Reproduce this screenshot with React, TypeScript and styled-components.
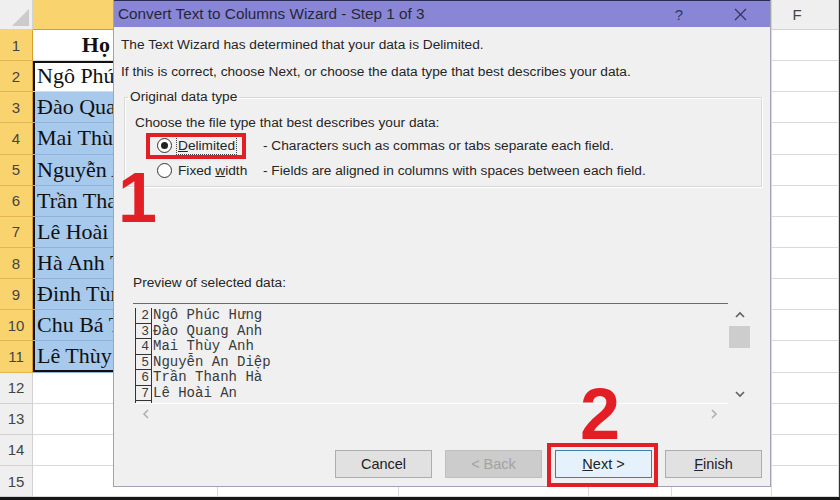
import React from 'react'
import styled, { createGlobalStyle } from 'styled-components'

const colors = {
    red: '#e31e24',
    yellow: '#f9d36e',
    yellowLine: '#e2b452',
    headGrey: '#efefef',
    headLine: '#d2d2d2',
    grid: '#dadada',
    blue: '#a7c9eb',
    dialog: '#f0f0f0',
    title: '#8986d6',
}

const GlobalStyle = createGlobalStyle`
    html, body {
        margin: 0;
        padding: 0;
    }
    body {
        width: 840px;
        height: 500px;
        overflow: hidden;
        background: #fff;
        font-family: 'Liberation Sans', Arial, sans-serif;
    }
`

const Screen = styled.div`
    position: relative;
    width: 840px;
    height: 500px;
    overflow: hidden;
    box-sizing: border-box;
    border-right: 1px solid #333;
    border-bottom: 3px solid #161616;
`

/* ---------- spreadsheet behind the dialog ---------- */

const Sheet = styled.div`
    display: grid;
    grid-template-columns: 33px 185px 181px 190px 83px 100px 1fr;
    grid-template-rows: 30px repeat(15, 31.15px);
`

const Corner = styled.div`
    position: relative;
    background: ${colors.headGrey};
    border-right: 1px solid ${colors.headLine};
    border-bottom: 1px solid ${colors.headLine};
    &:after {
        content: '';
        position: absolute;
        right: 3px;
        bottom: 3px;
        border-left: 17px solid transparent;
        border-bottom: 17px solid #cbcbcb;
    }
`

const ColHead = styled.div<{ $active?: boolean }>`
    box-sizing: border-box;
    display: flex;
    align-items: center;
    justify-content: center;
    padding-right: ${(p) => (p.$active ? 0 : 16)}px;
    font-size: 15px;
    color: #444;
    background: ${(p) => (p.$active ? colors.yellow : colors.headGrey)};
    border-right: 1px solid ${(p) => (p.$active ? colors.yellowLine : colors.headLine)};
    border-bottom: 1px solid ${(p) => (p.$active ? '#d69c2c' : colors.headLine)};
`

const RowHead = styled.div<{ $active?: boolean }>`
    box-sizing: border-box;
    display: flex;
    align-items: center;
    justify-content: center;
    font-size: 15px;
    color: #444;
    background: ${(p) => (p.$active ? colors.yellow : colors.headGrey)};
    border-right: 1px solid ${(p) => (p.$active ? '#d69c2c' : colors.headLine)};
    border-bottom: 1px solid ${(p) => (p.$active ? colors.yellowLine : colors.headLine)};
`

const Cell = styled.div<{ $blue?: boolean; $head?: boolean; $sel?: string }>`
    box-sizing: border-box;
    display: flex;
    align-items: center;
    justify-content: ${(p) => (p.$head ? 'center' : 'flex-start')};
    padding-left: 4px;
    overflow: hidden;
    white-space: nowrap;
    font-family: 'Liberation Serif', 'Times New Roman', serif;
    font-size: 22px;
    font-weight: ${(p) => (p.$head ? 700 : 400)};
    color: #111;
    background: ${(p) => (p.$blue ? colors.blue : '#fff')};
    border-right: 1px solid ${colors.grid};
    border-bottom: 1px solid ${(p) => (p.$blue ? '#8fb3d8' : colors.grid)};
    box-shadow: ${(p) => p.$sel || 'none'};
`

const names = [
    'Ngô Phúc Hưng',
    'Đào Quang Anh',
    'Mai Thùy Anh',
    'Nguyễn An Diệp',
    'Trần Thanh Hà',
    'Lê Hoài An',
    'Hà Anh Tuấn',
    'Đinh Tùng Lâm',
    'Chu Bá Thông',
    'Lê Thùy Linh',
]

// B..E sit under the dialog, so their letters are never seen
const columns = ['A', 'B', 'C', 'D', 'E', 'F']

const SpreadSheet = () => {
    const cells: React.ReactNode[] = [<Corner key='corner' />]
    columns.forEach((c) =>
        cells.push(
            <ColHead key={c} $active={c === 'A'}>
                {c === 'F' ? c : ''}
            </ColHead>
        )
    )
    for (let r = 1; r <= 15; r++) {
        cells.push(
            <RowHead key={'r' + r} $active={r <= 11}>
                {r}
            </RowHead>
        )
        columns.forEach((c) => {
            let text = ''
            let sel = ''
            if (c === 'A' && r === 1) text = 'Họ và tên'
            if (c === 'A' && r >= 2 && r <= 11) {
                text = names[r - 2]
                const parts = ['inset 2px 0 0 #111']
                if (r === 2) parts.push('inset 0 2px 0 #111')
                if (r === 11) parts.push('inset 0 -2px 0 #111')
                sel = parts.join(', ')
            }
            cells.push(
                <Cell key={c + r} $head={r === 1} $blue={c === 'A' && r >= 3 && r <= 11} $sel={sel}>
                    {text}
                </Cell>
            )
        })
    }
    return <Sheet>{cells}</Sheet>
}

/* ---------- the wizard dialog ---------- */

const Dialog = styled.div`
    position: absolute;
    left: 113px;
    top: 0;
    width: 658px;
    height: 487px;
    box-sizing: border-box;
    display: flex;
    flex-direction: column;
    background: ${colors.dialog};
    border: 1px solid #a3a2b4;
    border-top: none;
    font-family: 'Liberation Sans', Arial, sans-serif;
    font-size: 13.7px;
    color: #262626;
`

const TitleBar = styled.div`
    height: 27px;
    flex: none;
    display: flex;
    align-items: center;
    padding: 0 23px 0 4px;
    background: ${colors.title};
    border-top: 1px solid #2c2a55;
    box-sizing: border-box;
`

const Title = styled.span`
    font-size: 15.3px;
    color: #26263a;
`

const TitleControls = styled.div`
    margin-left: auto;
    display: flex;
    align-items: center;
    gap: 51px;
    color: #34345c;
    font-size: 15px;
`

const Body = styled.div`
    flex: 1;
    display: flex;
    flex-direction: column;
    padding: 9px 8px 8px 7px;
`

const Line = styled.div<{ $mt?: number; $ml?: number }>`
    line-height: 18px;
    margin-top: ${(p) => p.$mt || 0}px;
    margin-left: ${(p) => p.$ml || 0}px;
    white-space: nowrap;
`

const GroupBox = styled.fieldset`
    margin: 7px 0 0 3px;
    padding: 0 0 3px 10px;
    border: 1px solid #d9d9d9;
    box-shadow: 1px 1px 0 #fff, inset 1px 1px 0 #fff;
`

const Legend = styled.legend`
    margin-left: -7px;
    padding: 0 2px;
    line-height: 18px;
`

const RadioRow = styled.div<{ $first?: boolean }>`
    position: relative;
    height: 25px;
    display: flex;
    align-items: center;
    margin: ${(p) => (p.$first ? 1 : 0)}px 0 0 22px;
`

const RadioDot = styled.span<{ $checked?: boolean }>`
    width: 13px;
    height: 13px;
    flex: none;
    border: 1px solid #333;
    border-radius: 50%;
    background: #fff;
    display: flex;
    align-items: center;
    justify-content: center;
    &:after {
        content: '';
        width: 7px;
        height: 7px;
        border-radius: 50%;
        background: ${(p) => (p.$checked ? '#222' : 'transparent')};
    }
`

const RadioLabel = styled.span`
    width: 85px;
    margin-left: 6px;
    flex: none;
`

const Focus = styled.span`
    outline: 1px dotted #444;
    outline-offset: 1px;
`

const Mnemonic = styled.span`
    text-decoration: underline;
`

const RedBox = styled.div<{ $l: number; $t: number; $w: number; $h: number }>`
    position: absolute;
    left: ${(p) => p.$l}px;
    top: ${(p) => p.$t}px;
    width: ${(p) => p.$w}px;
    height: ${(p) => p.$h}px;
    box-sizing: border-box;
    border: 4px solid ${colors.red};
    pointer-events: none;
`

const Preview = styled.div`
    margin: 11px 2px 0 12px;
    display: grid;
    grid-template-columns: 1fr 32px;
    grid-template-rows: 101px 20px;
`

const PreviewList = styled.div`
    overflow: hidden;
    box-sizing: border-box;
    padding-top: 4px;
    border-top: 1px solid #6b6b6b;
    border-bottom: 1px solid #fff;
    font-family: 'Liberation Mono', 'Courier New', monospace;
    font-size: 14px;
    color: #3a3a3a;
`

const PreviewRow = styled.div`
    display: flex;
    height: 15.5px;
    line-height: 15.5px;
    white-space: pre;
`

const RowNum = styled.span`
    width: 17px;
    margin-left: 2px;
    margin-right: 1px;
    padding-right: 2px;
    box-sizing: border-box;
    text-align: right;
    border-left: 1px solid #333;
    border-right: 1px solid #333;
    border-bottom: 1px solid #333;
    font-size: 13px;
`

const VScroll = styled.div`
    display: flex;
    flex-direction: column;
    padding: 6px 0 4px 1px;
`

const Arrow = styled.div<{ $end?: boolean }>`
    width: 21px;
    height: 12px;
    margin-top: ${(p) => (p.$end ? 'auto' : '0')};
    display: flex;
    align-items: center;
    justify-content: center;
`

const Thumb = styled.div`
    width: 21px;
    height: 22px;
    margin-top: 5px;
    background: #cdcdcd;
`

const HScroll = styled.div`
    display: flex;
    align-items: center;
    justify-content: space-between;
    padding: 0 10px 0 9px;
`

const Buttons = styled.div`
    margin-top: auto;
    display: flex;
    justify-content: flex-end;
    gap: 13px;
`

const ButtonWrap = styled.div`
    position: relative;
`

const Button = styled.div<{ $kind?: 'default' | 'disabled' }>`
    width: 97px;
    height: 28px;
    box-sizing: border-box;
    display: flex;
    align-items: center;
    justify-content: center;
    font-size: 14.5px;
    color: ${(p) => (p.$kind === 'disabled' ? '#a3a3a3' : '#222')};
    background: ${(p) => (p.$kind === 'default' ? '#e5f1fb' : p.$kind === 'disabled' ? '#cccccc' : '#e1e1e1')};
    border: 1px solid ${(p) => (p.$kind === 'default' ? '#3f7ea8' : p.$kind === 'disabled' ? '#bfbfbf' : '#adadad')};
`

const BigNumber = styled.div<{ $l: number; $t: number; $size: number }>`
    position: absolute;
    left: ${(p) => p.$l}px;
    top: ${(p) => p.$t}px;
    font-family: 'Liberation Sans', Arial, sans-serif;
    font-weight: 700;
    font-size: ${(p) => p.$size}px;
    line-height: 1;
    color: ${colors.red};
`

const Chevron = ({ dir, color }: { dir: 'up' | 'down' | 'left' | 'right'; color: string }) => {
    const pts = {
        up: '1,6 5,2 9,6',
        down: '1,2 5,6 9,2',
        left: '6,1 2,5 6,9',
        right: '2,1 6,5 2,9',
    }[dir]
    const vertical = dir === 'up' || dir === 'down'
    return (
        <svg width={vertical ? 10 : 8} height={vertical ? 8 : 10} viewBox={vertical ? '0 0 10 8' : '0 0 8 10'}>
            <polyline points={pts} fill='none' stroke={color} strokeWidth='1.6' />
        </svg>
    )
}

const preview = [
    ['2', 'Ngô Phúc Hưng'],
    ['3', 'Đào Quang Anh'],
    ['4', 'Mai Thùy Anh'],
    ['5', 'Nguyễn An Diệp'],
    ['6', 'Trần Thanh Hà'],
    ['7', 'Lê Hoài An'],
    [' ', ' '],
]

const Wizard = () => (
    <Dialog>
        <TitleBar>
            <Title>Convert Text to Columns Wizard - Step 1 of 3</Title>
            <TitleControls>
                <span>?</span>
                <svg width='13' height='13' viewBox='0 0 13 13'>
                    <path d='M1 1 L12 12 M12 1 L1 12' stroke='#34345c' strokeWidth='1.2' />
                </svg>
            </TitleControls>
        </TitleBar>
        <Body>
            <Line>The Text Wizard has determined that your data is Delimited.</Line>
            <Line $mt={9}>If this is correct, choose Next, or choose the data type that best describes your data.</Line>
            <GroupBox>
                <Legend>Original data type</Legend>
                <Line $mt={8}>Choose the file type that best describes your data:</Line>
                <RadioRow $first>
                    <RadioDot $checked />
                    <RadioLabel>
                        <Focus>
                            <Mnemonic>D</Mnemonic>elimited
                        </Focus>
                    </RadioLabel>
                    <span>- Characters such as commas or tabs separate each field.</span>
                    <RedBox $l={-11} $t={0} $w={100} $h={26} />
                </RadioRow>
                <RadioRow>
                    <RadioDot />
                    <RadioLabel>
                        Fixed <Mnemonic>w</Mnemonic>idth
                    </RadioLabel>
                    <span>- Fields are aligned in columns with spaces between each field.</span>
                </RadioRow>
            </GroupBox>
            <Line $mt={87} $ml={12}>
                Preview of selected data:
            </Line>
            <Preview>
                <PreviewList>
                    {preview.map(([n, t], i) => (
                        <PreviewRow key={i}>
                            <RowNum>{n}</RowNum>
                            {t}
                        </PreviewRow>
                    ))}
                </PreviewList>
                <VScroll>
                    <Arrow>
                        <Chevron dir='up' color='#606060' />
                    </Arrow>
                    <Thumb />
                    <Arrow $end>
                        <Chevron dir='down' color='#606060' />
                    </Arrow>
                </VScroll>
                <HScroll>
                    <Chevron dir='left' color='#b0b0b0' />
                    <Chevron dir='right' color='#b0b0b0' />
                </HScroll>
                <div />
            </Preview>
            <Buttons>
                <Button>Cancel</Button>
                <Button $kind='disabled'>&lt; Back</Button>
                <ButtonWrap>
                    <Button $kind='default'>
                        <Mnemonic>N</Mnemonic>ext &gt;
                    </Button>
                    <RedBox $l={-8} $t={-7} $w={111} $h={44} />
                </ButtonWrap>
                <Button>
                    <Mnemonic>F</Mnemonic>inish
                </Button>
            </Buttons>
        </Body>
    </Dialog>
)

const App = () => (
    <Screen>
        <GlobalStyle />
        <SpreadSheet />
        <Wizard />
        <BigNumber $l={118} $t={163} $size={70}>
            1
        </BigNumber>
        <BigNumber $l={580} $t={378} $size={72}>
            2
        </BigNumber>
    </Screen>
)

export default App
